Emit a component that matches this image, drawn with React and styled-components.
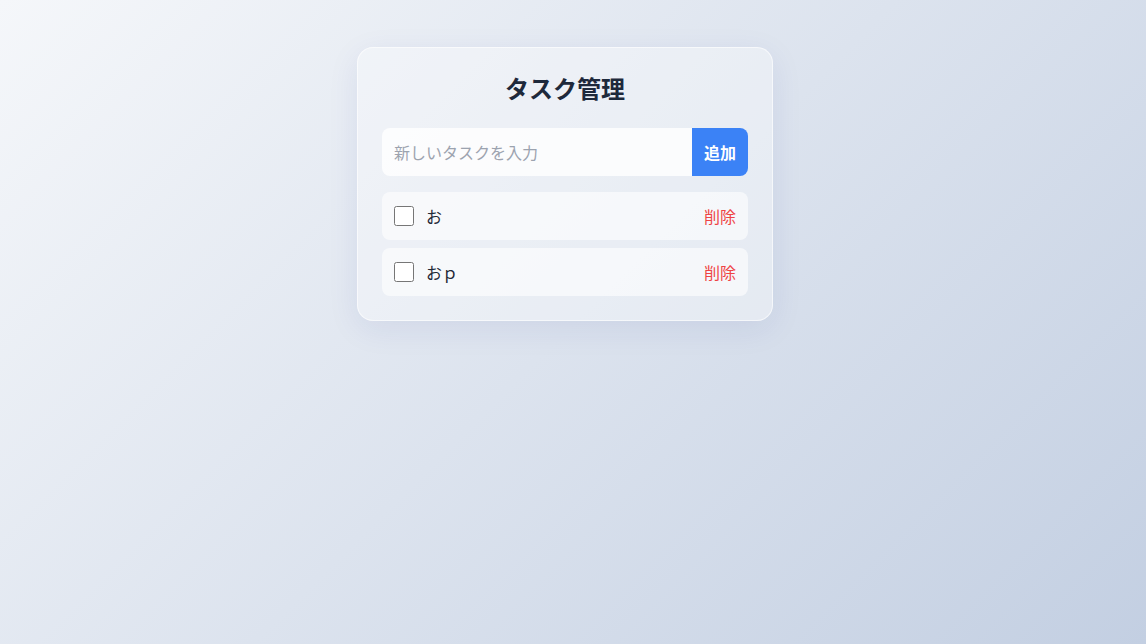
import React, { useState } from 'react'
import styled, { createGlobalStyle } from 'styled-components'

const GlobalStyle = createGlobalStyle`
  html, body {
    margin: 0;
  }
  body {
    min-height: 100vh;
    background: linear-gradient(135deg, #f5f7fa 0%, #c3cfe2 100%);
    background-attachment: fixed;
    font-family: "Noto Sans CJK JP", "Noto Sans", sans-serif;
    color: #1f2937;
  }
  * {
    box-sizing: border-box;
  }
`

function App() {
  const [text, setText] = useState('')
  const [tasks, setTasks] = useState([
    { id: 1, title: 'お', done: false },
    { id: 2, title: 'おｐ', done: false },
  ])

  const addTask = () => {
    if (!text.trim()) return
    setTasks([...tasks, { id: Date.now(), title: text, done: false }])
    setText('')
  }

  const toggle = (id) =>
    setTasks(tasks.map((t) => (t.id === id ? { ...t, done: !t.done } : t)))

  const remove = (id) => setTasks(tasks.filter((t) => t.id !== id))

  return (
    <Page>
      <GlobalStyle />
      <Card>
        <Title>タスク管理</Title>
        <InputRow>
          <TaskInput
            placeholder="新しいタスクを入力"
            value={text}
            onChange={(e) => setText(e.target.value)}
            onKeyDown={(e) => e.key === 'Enter' && addTask()}
          />
          <AddButton onClick={addTask}>追加</AddButton>
        </InputRow>
        <List>
          {tasks.map((t) => (
            <Item key={t.id}>
              <Check type="checkbox" checked={t.done} onChange={() => toggle(t.id)} />
              <Label $done={t.done}>{t.title}</Label>
              <DeleteButton onClick={() => remove(t.id)}>削除</DeleteButton>
            </Item>
          ))}
        </List>
      </Card>
    </Page>
  )
}

export default App

// right padding leaves room where the browser's scrollbar sat
const Page = styled.div`
  min-height: 100vh;
  padding: 47px 32px 16px 16px;
  display: flex;
  justify-content: center;
  align-items: flex-start;
`

const Card = styled.div`
  width: 416px;
  padding: 24px;
  border-radius: 16px;
  background: rgba(255, 255, 255, 0.35);
  border: 1px solid rgba(255, 255, 255, 0.6);
  box-shadow: 0 8px 32px rgba(31, 38, 135, 0.08);
`

const Title = styled.h1`
  margin: 0 0 24px;
  font-size: 24px;
  line-height: 32px;
  font-weight: 700;
  text-align: center;
  color: #1e293b;
`

const InputRow = styled.div`
  display: flex;
  height: 48px;
`

const TaskInput = styled.input`
  flex: 1;
  min-width: 0;
  border: none;
  outline: none;
  padding: 0 12px;
  font-size: 16px;
  font-family: inherit;
  color: #1f2937;
  background: rgba(255, 255, 255, 0.8);
  border-radius: 8px 0 0 8px;

  &::placeholder {
    color: #9ca3af;
  }
`

const AddButton = styled.button`
  width: 56px;
  border: none;
  border-radius: 0 8px 8px 0;
  background: #3b82f6;
  color: #fff;
  font-size: 16px;
  font-weight: 600;
  font-family: inherit;
  cursor: pointer;

  &:hover {
    background: #2563eb;
  }
`

const List = styled.ul`
  list-style: none;
  margin: 16px 0 0;
  padding: 0;
  display: flex;
  flex-direction: column;
  gap: 8px;
`

const Item = styled.li`
  display: flex;
  align-items: center;
  height: 48px;
  padding: 0 12px;
  border-radius: 8px;
  background: rgba(255, 255, 255, 0.6);
`

const Check = styled.input`
  width: 20px;
  height: 20px;
  margin: 0 12px 0 0;
  cursor: pointer;
`

const Label = styled.span`
  flex: 1;
  font-size: 16px;
  color: #1f2937;
  text-decoration: ${(p) => (p.$done ? 'line-through' : 'none')};
  opacity: ${(p) => (p.$done ? 0.5 : 1)};
`

const DeleteButton = styled.button`
  border: none;
  background: none;
  padding: 0;
  color: #ef4444;
  font-size: 16px;
  font-family: inherit;
  cursor: pointer;
`
